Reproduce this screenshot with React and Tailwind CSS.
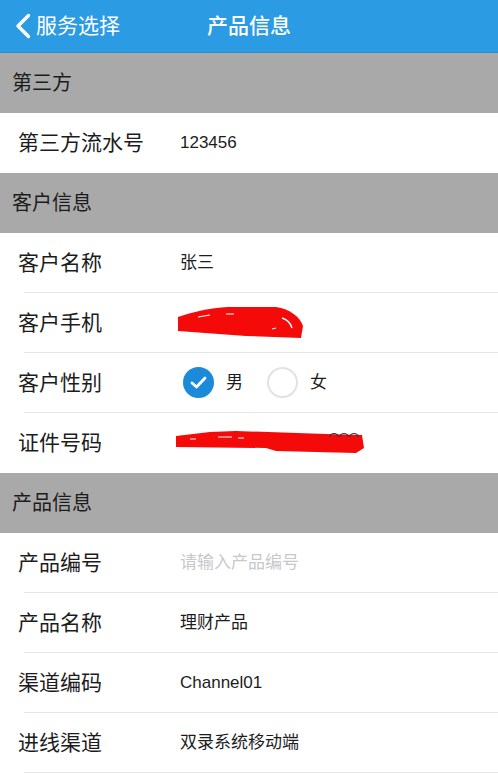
import React from "react";

const font = { fontFamily: '"Liberation Sans", "Noto Sans CJK SC", sans-serif' };

// Red scribble over the phone number
const PhoneScribble = () => (
  <svg width="130" height="36" viewBox="0 0 130 36" className="-ml-[4px]">
    <path
      d="M2,12 C16,7 34,3 52,2 L100,2 C114,4 124,12 127,21 L125,33 L70,31 L2,26 Z"
      fill="#f50a0a"
    />
    <path d="M22,12 L34,10 M50,9 L58,9" stroke="#fff" strokeWidth="1.2" fill="none" />
    <path d="M106,13 C112,15 115,19 116,23" stroke="#fff" strokeWidth="1.5" fill="none" />
    <path d="M96,24 L100,23" stroke="#fff" strokeWidth="1" />
  </svg>
);

// Red scribble over the ID number
const IdScribble = () => (
  <svg width="192" height="26" viewBox="0 0 192 26" className="-ml-[4px]">
    <path
      d="M0,6 L34,2 L60,1 L150,4 L186,5 L188,18 L180,23 L100,21 L90,18 L0,17 Z"
      fill="#f50a0a"
    />
    <path d="M14,9 L20,9 M42,7 L56,7 M62,8 L68,8" stroke="#fff" strokeWidth="1" />
    <g stroke="#333" strokeWidth="1.2" fill="none">
      <path d="M154,7 A4,3.5 0 0 1 162,7" />
      <path d="M164,7 A4,3.5 0 0 1 172,7" />
      <path d="M174,7 A4,3.5 0 0 1 182,7" />
    </g>
  </svg>
);

const Section = ({ title }) => (
  <div className="h-[60px] bg-[#a9a9a9] flex items-center px-3 text-[20px] text-[#1c1c1c]">
    {title}
  </div>
);

const Row = ({ label, children, divider = true }) => (
  <>
    <div className={`${divider ? "h-[59px]" : "h-[60px]"} flex items-center pl-[18px] bg-white`}>
      <div className="w-[162px] text-[21px] text-[#1c1c1c]">{label}</div>
      <div className="flex-1 flex items-center text-[17px] text-[#1c1c1c]">{children}</div>
    </div>
    {divider && <div className="ml-[24px] h-px bg-[#e6e6e6]" />}
  </>
);

const Radio = ({ checked, label }) => (
  <div className="flex items-center">
    {checked ? (
      <div className="w-[31px] h-[31px] rounded-full bg-[#1a8ad9] flex items-center justify-center">
        <svg width="17" height="13" viewBox="0 0 17 13">
          <polyline
            points="2,7 6.5,11 15,2"
            fill="none"
            stroke="#fff"
            strokeWidth="2.8"
            strokeLinecap="round"
            strokeLinejoin="round"
          />
        </svg>
      </div>
    ) : (
      <div className="w-[31px] h-[31px] rounded-full border-2 border-[#e2e2e2]" />
    )}
    <span className="ml-[12px] text-[17px]">{label}</span>
  </div>
);

export default function App() {
  return (
    <div className="w-[498px] min-h-[775px] bg-white" style={font}>
      {/* Nav bar */}
      <div className="h-[53px] bg-[#2b9be3] border-b border-[#2a8dcc] flex items-center text-white">
        <div className="w-[207px] shrink-0 flex items-center pl-[15px]">
          <svg width="16" height="26" viewBox="0 0 16 26">
            <polyline
              points="13.5,2.5 3,13 13.5,23.5"
              fill="none"
              stroke="#fff"
              strokeWidth="3.4"
              strokeLinecap="round"
              strokeLinejoin="round"
            />
          </svg>
          <span className="ml-[5px] text-[21px]">服务选择</span>
        </div>
        <div className="text-[21px] font-medium">产品信息</div>
      </div>

      <Section title="第三方" />
      <Row label="第三方流水号" divider={false}>123456</Row>

      <Section title="客户信息" />
      <Row label="客户名称">张三</Row>
      <Row label="客户手机">
        <PhoneScribble />
      </Row>
      <Row label="客户性别">
        <div className="flex items-center gap-[24px] ml-[3px]">
          <Radio checked label="男" />
          <Radio label="女" />
        </div>
      </Row>
      <Row label="证件号码" divider={false}>
        <IdScribble />
      </Row>

      <Section title="产品信息" />
      <Row label="产品编号">
        <span className="text-[#c7c7cd]">请输入产品编号</span>
      </Row>
      <Row label="产品名称">理财产品</Row>
      <Row label="渠道编码">Channel01</Row>
      <Row label="进线渠道">双录系统移动端</Row>
    </div>
  );
}
